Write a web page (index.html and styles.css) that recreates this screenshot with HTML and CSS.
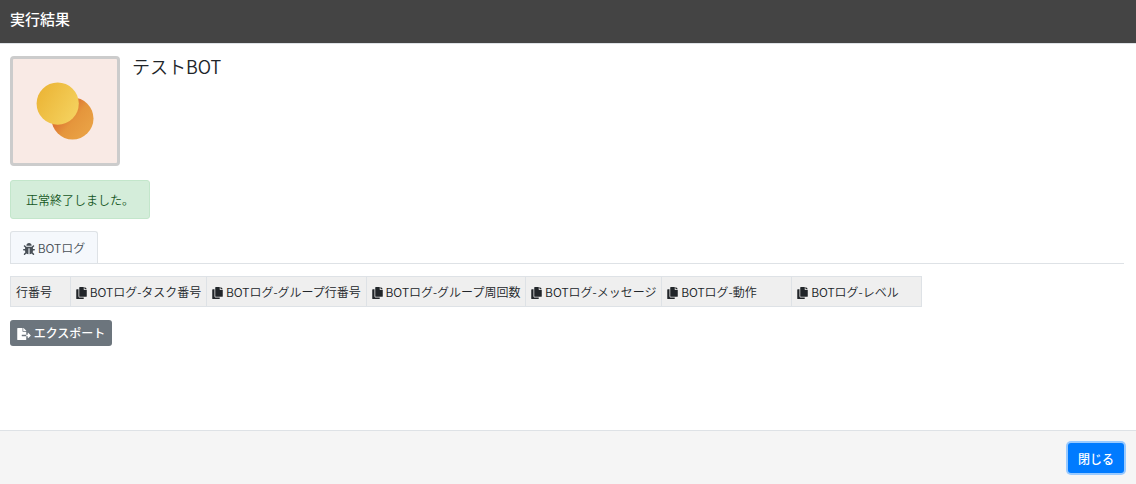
FILE: index.html
```html
<!DOCTYPE html>
<html lang="ja">
<head>
    <meta charset="UTF-8">
    <meta name="viewport" content="width=device-width, initial-scale=1.0">
    <title>実行結果</title>
    <link rel="stylesheet" href="styles.css">
</head>
<body>

    <!-- Shared icons -->
    <svg class="sprite" aria-hidden="true">
        <symbol id="icon-copy" viewBox="0 0 448 512">
            <path d="M320 448v40c0 13.255-10.745 24-24 24H24c-13.255 0-24-10.745-24-24V120c0-13.255 10.745-24 24-24h72v296c0 30.879 25.121 56 56 56h168zm0-344V0H152c-13.255 0-24 10.745-24 24v368c0 13.255 10.745 24 24 24h272c13.255 0 24-10.745 24-24V128H344c-13.2 0-24-10.8-24-24zm120.971-31.029L375.029 7.029A24 24 0 0 0 358.059 0H352v96h96v-6.059a24 24 0 0 0-7.029-16.97z"/>
        </symbol>
        <symbol id="icon-bug" viewBox="0 0 512 512">
            <path d="M511.988 288.9c-.478 17.43-15.217 31.1-32.653 31.1H424v16c0 21.864-4.882 42.584-13.6 61.145l60.228 60.228c12.496 12.497 12.496 32.758 0 45.255-12.498 12.497-32.759 12.496-45.256 0l-54.736-54.736C345.886 467.965 314.351 480 280 480V236c0-6.627-5.373-12-12-12h-24c-6.627 0-12 5.373-12 12v244c-34.351 0-65.886-12.035-90.636-32.108l-54.736 54.736c-12.498 12.497-32.759 12.496-45.256 0-12.496-12.497-12.496-32.758 0-45.255l60.228-60.228C92.882 378.584 88 357.864 88 336v-16H32.666C15.23 320 .491 306.33.013 288.9-.484 270.816 14.028 256 32 256h56v-58.745l-46.628-46.628c-12.496-12.497-12.496-32.758 0-45.255 12.498-12.497 32.758-12.497 45.256 0L141.255 160h229.489l54.627-54.627c12.498-12.497 32.758-12.497 45.256 0 12.496 12.497 12.496 32.758 0 45.255L424 197.255V256h56c17.972 0 32.484 14.816 31.988 32.9zM257 0c-61.856 0-112 50.144-112 112h224C369 50.144 318.856 0 257 0z"/>
        </symbol>
        <symbol id="icon-export" viewBox="0 0 576 512">
            <path d="M384 121.9c0-6.3-2.5-12.4-7-16.9L279.1 7c-4.5-4.5-10.6-7-17-7H256v128h128zM571 308l-95.7-96.4c-10.1-10.1-27.4-3-27.4 11.3V288h-64v64h64v65.2c0 14.3 17.3 21.4 27.4 11.3L571 332c6.6-6.6 6.6-17.4 0-24zm-379 28v-32c0-8.8 7.2-16 16-16h176V160H248c-13.2 0-24-10.8-24-24V0H24C10.7 0 0 10.7 0 24v464c0 13.3 10.7 24 24 24h336c13.3 0 24-10.7 24-24V352H208c-8.8 0-16-7.2-16-16z"/>
        </symbol>
    </svg>

    <div class="modal">
        <header class="modal-header">
            <h1 class="modal-title">実行結果</h1>
        </header>

        <main class="modal-body">
            <div class="bot">
                <svg class="bot-image" viewBox="0 0 104 104" role="img" aria-label="テストBOT">
                    <defs>
                        <linearGradient id="yellow" x1="0" y1="0.2" x2="1" y2="0.8">
                            <stop offset="0" stop-color="#ebb435"/>
                            <stop offset="1" stop-color="#f5d360"/>
                        </linearGradient>
                        <linearGradient id="orange" x1="0.1" y1="0.2" x2="0.8" y2="0.8">
                            <stop offset="0.2" stop-color="#db6b30"/>
                            <stop offset="0.6" stop-color="#e5963c"/>
                            <stop offset="1" stop-color="#e9a044"/>
                        </linearGradient>
                    </defs>
                    <circle cx="59.5" cy="59.5" r="21" fill="url(#orange)"/>
                    <circle cx="44.7" cy="44.6" r="21.1" fill="url(#yellow)"/>
                </svg>
                <h2 class="bot-name">テストBOT</h2>
            </div>

            <div class="alert" role="status">正常終了しました。</div>

            <ul class="tabs">
                <li><a class="tab" href="#log"><svg class="icon"><use href="#icon-bug"/></svg> BOTログ</a></li>
            </ul>

            <div class="log" id="log">
                <table class="log-table">
                    <thead>
                        <tr>
                            <th class="col-line">行番号</th>
                            <th><svg class="icon icon-copy"><use href="#icon-copy"/></svg> BOTログ-タスク番号</th>
                            <th><svg class="icon icon-copy"><use href="#icon-copy"/></svg> BOTログ-グループ行番号</th>
                            <th><svg class="icon icon-copy"><use href="#icon-copy"/></svg> BOTログ-グループ周回数</th>
                            <th><svg class="icon icon-copy"><use href="#icon-copy"/></svg> BOTログ-メッセージ</th>
                            <th><svg class="icon icon-copy"><use href="#icon-copy"/></svg> BOTログ-動作</th>
                            <th><svg class="icon icon-copy"><use href="#icon-copy"/></svg> BOTログ-レベル</th>
                        </tr>
                    </thead>
                </table>
            </div>

            <button class="btn btn-export" type="button"><svg class="icon icon-export"><use href="#icon-export"/></svg> エクスポート</button>
        </main>

        <footer class="modal-footer">
            <button class="btn btn-close" type="button">閉じる</button>
        </footer>
    </div>

</body>
</html>
```
FILE: styles.css
```css
* {
    margin: 0;
    padding: 0;
    box-sizing: border-box;
}

body {
    font-family: "Noto Sans CJK JP", "Noto Sans", sans-serif;
    font-size: 12px;
    font-weight: 350;
    line-height: 18px;
    color: #212529;
    background: #fff;
}

.sprite {
    display: none;
}

.icon {
    width: 12px;
    height: 12px;
    fill: currentColor;
    vertical-align: -2px;
}

.icon-copy {
    width: 11px;
}

.icon-export {
    width: 14px;
}

.modal {
    display: flex;
    flex-direction: column;
    min-height: 100vh;
}

.modal-header {
    padding: 7px 10px 13px;
    background: #444;
    border-bottom: 1px solid #dee2e6;
}

.modal-title {
    font-size: 15px;
    font-weight: 500;
    line-height: 23px;
    color: #fff;
}

.modal-body {
    flex: 1;
    padding: 12px 12px 12px 10px;
}

.bot {
    display: flex;
    align-items: flex-start;
    gap: 12px;
    margin-bottom: 14px;
}

.bot-image {
    width: 110px;
    height: 110px;
    background: #f9eae5;
    border: 3px solid #ccc;
    border-radius: 4px;
}

.bot-name {
    font-size: 18px;
    font-weight: 350;
    line-height: 20px;
}

.alert {
    width: fit-content;
    margin-bottom: 12px;
    padding: 10px 15px;
    line-height: 17px;
    color: #155724;
    background: #d4edda;
    border: 1px solid #c3e6cb;
    border-radius: 3px;
}

.tabs {
    display: flex;
    margin-bottom: 12px;
    list-style: none;
    border-bottom: 1px solid #dee2e6;
}

.tab {
    display: block;
    padding: 7px 12px 6px;
    color: #495057;
    text-decoration: none;
    background: #f5f8fc;
    border: 1px solid #dee2e6;
    border-bottom: none;
    border-radius: 3px 3px 0 0;
}

.log {
    margin-bottom: 13px;
    overflow-x: auto;
}

.log-table {
    border-collapse: collapse;
    background: #efefef;
}

.log-table th {
    min-width: 130px;
    padding: 6px 5px 5px;
    font-weight: 350;
    text-align: left;
    white-space: nowrap;
    border: 1px solid #dee2e6;
}

.log-table .col-line {
    min-width: 60px;
}

.btn {
    font-family: inherit;
    font-size: 12px;
    font-weight: 500;
    line-height: 18px;
    color: #fff;
    border: 1px solid transparent;
    border-radius: 3px;
    cursor: pointer;
}

.btn-export {
    padding: 3px 6px;
    background: #6c757d;
}

.btn-export:hover {
    background: #5a6268;
}

.modal-footer {
    display: flex;
    justify-content: flex-end;
    padding: 12px 12px 11px;
    background: #f5f5f5;
    border-top: 1px solid #dee2e6;
}

.btn-close {
    padding: 6px 9px 4px;
    background: #007bff;
    box-shadow: 0 0 0 2px #99caff;
}

.btn-close:hover {
    background: #0069d9;
}
```
